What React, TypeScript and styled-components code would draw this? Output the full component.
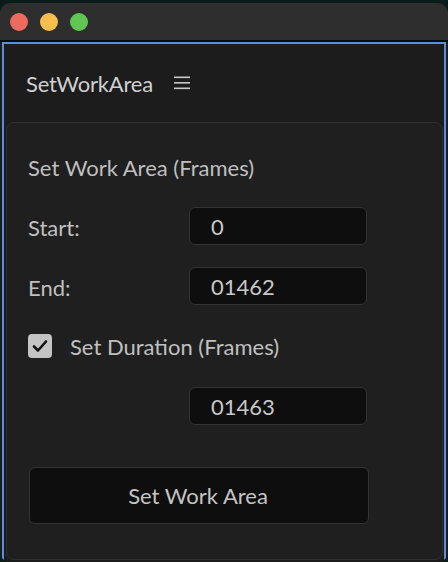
import React from "react";
import styled, { createGlobalStyle } from "styled-components";

const Global = createGlobalStyle`
  html, body { margin: 0; padding: 0; }
  body {
    width: 448px;
    height: 562px;
    overflow: hidden;
    background: #0c1c1a;
    font-family: "Lato", "Open Sans", "Liberation Sans", sans-serif;
  }
`;

const Window = styled.div`
  margin-top: 3px;
  width: 448px;
  height: 559px;
  display: flex;
  flex-direction: column;
  border-radius: 11px 11px 10px 10px;
  overflow: hidden;
  background: #1c1c1c;
`;

const TitleBar = styled.div`
  height: 37px;
  flex: none;
  background: #2e2e2e;
  border-bottom: 2px solid #0a0a0a;
  display: flex;
  align-items: center;
  gap: 12px;
  padding-left: 10px;
`;

const Light = styled.span<{ $c: string }>`
  width: 18px;
  height: 18px;
  border-radius: 50%;
  background: ${(p) => p.$c};
`;

const Frame = styled.div`
  flex: 1;
  margin: 0 2px;
  border: 2px solid #5a8ed8;
  border-bottom: none;
  display: flex;
  flex-direction: column;
  padding: 0 1px 2px 2px;
  background: #1c1c1c;
`;

const Header = styled.div`
  height: 78px;
  flex: none;
  display: flex;
  align-items: center;
  padding-left: 20px;
  gap: 21px;
`;

const HeaderTitle = styled.span`
  font-size: 22px;
  color: #d0d0d0;
  letter-spacing: -0.2px;
`;

const Panel = styled.div`
  flex: 1;
  border: 1px solid #303030;
  border-radius: 8px;
  background: #1f1f1f;
  padding: 33px 21px 0 21px;
  display: flex;
  flex-direction: column;
  gap: 22px;
`;

const SectionTitle = styled.div`
  font-size: 22px;
  color: #bfbfbf;
  height: 24px;
  line-height: 24px;
  margin-bottom: 5px;
`;

const Row = styled.div`
  display: flex;
  align-items: center;
  height: 38px;
`;

const Label = styled.span`
  width: 161px;
  font-size: 22px;
  color: #bfbfbf;
  padding-top: 3px;
`;

const Field = styled.div<{ $offset?: boolean }>`
  box-sizing: content-box;
  width: 155px;
  height: 36px;
  margin-left: ${(p) => (p.$offset ? "161px" : "0")};
  border: 1px solid #333;
  border-radius: 6px;
  background: #0e0e0e;
  color: #c8c8c8;
  font-size: 22px;
  display: flex;
  align-items: center;
  padding-left: 21px;
`;

const Check = styled.span`
  width: 24px;
  height: 24px;
  border-radius: 4px;
  background: #c4c4c4;
  display: flex;
  align-items: center;
  justify-content: center;
  margin-right: 18px;
`;

const CheckLabel = styled.span`
  font-size: 22px;
  color: #c0c0c0;
`;

const Button = styled.div`
  margin-top: 20px;
  margin-left: 1px;
  width: 336px;
  height: 55px;
  border: 1px solid #333;
  border-radius: 6px;
  background: #0e0e0e;
  color: #c4c4c4;
  font-size: 22px;
  display: flex;
  align-items: center;
  justify-content: center;
  padding-right: 2px;
`;

export default function App() {
  return (
    <>
      <Global />
      <Window>
        <TitleBar>
          <Light $c="#ec6a5e" />
          <Light $c="#f5bf4f" />
          <Light $c="#61c554" />
        </TitleBar>
        <Frame>
          <Header>
            <HeaderTitle>SetWorkArea</HeaderTitle>
            <svg width="17" height="14" viewBox="0 0 17 14">
              <rect x="0" y="0.5" width="16" height="1.6" fill="#c8c8c8" />
              <rect x="0" y="6" width="16" height="1.6" fill="#c8c8c8" />
              <rect x="0" y="11.5" width="16" height="1.6" fill="#c8c8c8" />
            </svg>
          </Header>
          <Panel>
            <SectionTitle>Set Work Area (Frames)</SectionTitle>
            <Row>
              <Label>Start:</Label>
              <Field>0</Field>
            </Row>
            <Row>
              <Label>End:</Label>
              <Field>01462</Field>
            </Row>
            <Row>
              <Check>
                <svg width="16" height="14" viewBox="0 0 16 14">
                  <path d="M2 7.5 L6 11.5 L14 2.5" stroke="#111" strokeWidth="2.6" fill="none" strokeLinecap="round" strokeLinejoin="round" />
                </svg>
              </Check>
              <CheckLabel>Set Duration (Frames)</CheckLabel>
            </Row>
            <Row>
              <Field $offset>01463</Field>
            </Row>
            <Button>Set Work Area</Button>
          </Panel>
        </Frame>
      </Window>
    </>
  );
}
